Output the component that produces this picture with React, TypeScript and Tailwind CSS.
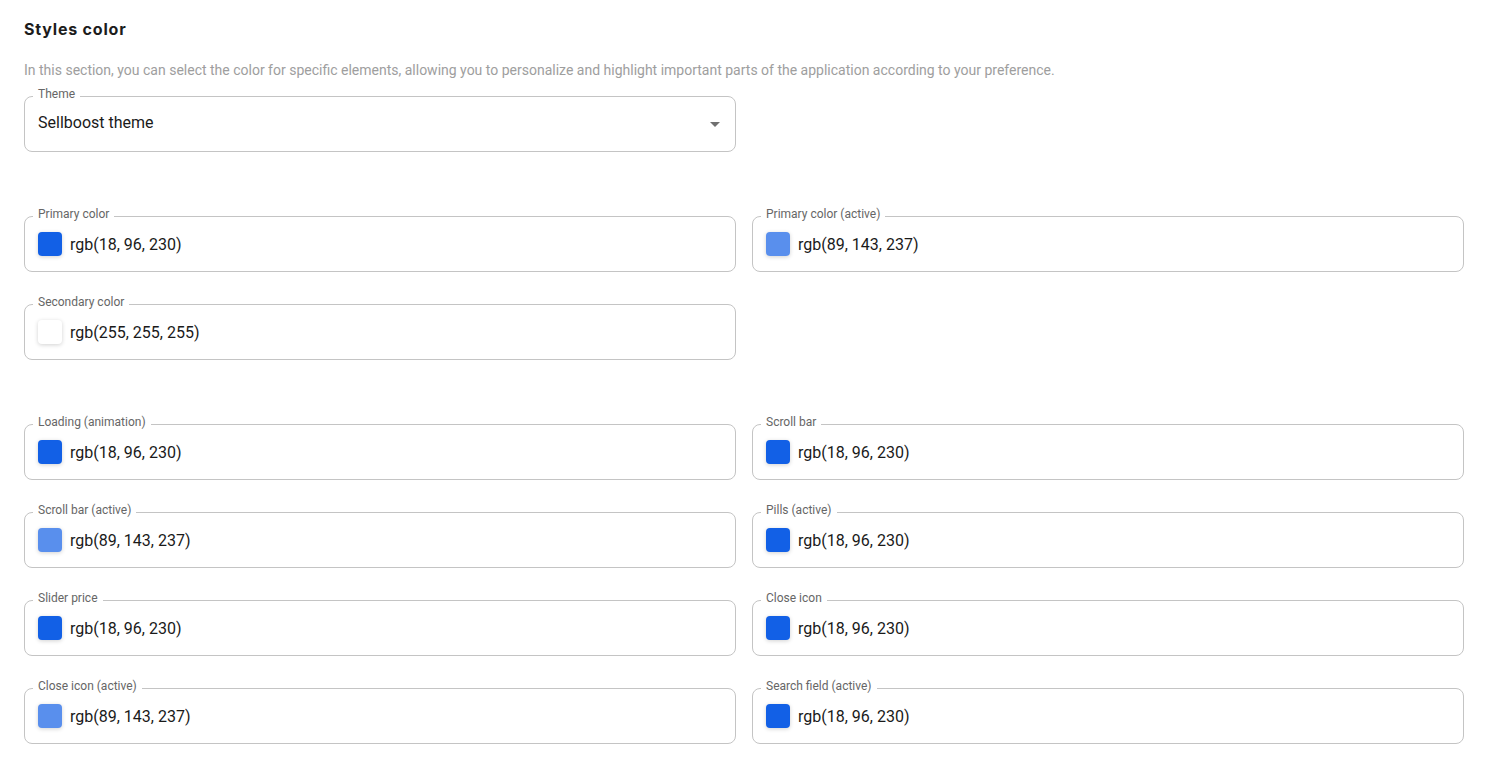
import { ReactNode } from 'react';

type ColorItem = { label: string; rgb: [number, number, number] };

const blue: [number, number, number] = [18, 96, 230];
const lightBlue: [number, number, number] = [89, 143, 237];

const baseColors: (ColorItem | null)[] = [
  { label: 'Primary color', rgb: blue },
  { label: 'Primary color (active)', rgb: lightBlue },
  { label: 'Secondary color', rgb: [255, 255, 255] },
  null,
];

const elementColors: ColorItem[] = [
  { label: 'Loading (animation)', rgb: blue },
  { label: 'Scroll bar', rgb: blue },
  { label: 'Scroll bar (active)', rgb: lightBlue },
  { label: 'Pills (active)', rgb: blue },
  { label: 'Slider price', rgb: blue },
  { label: 'Close icon', rgb: blue },
  { label: 'Close icon (active)', rgb: lightBlue },
  { label: 'Search field (active)', rgb: blue },
];

// Outlined field with the label sitting on the top border
const OutlinedField = ({ label, children }: { label: string; children: ReactNode }) => (
  <div className="relative h-14 rounded-lg border border-[#c4c4c4] flex items-center px-[13px]">
    <span className="absolute left-[8px] -top-[11px] bg-white px-[5px] text-xs leading-4 text-[#666666]">
      {label}
    </span>
    {children}
  </div>
);

const ColorField = ({ item }: { item: ColorItem }) => {
  const value = `rgb(${item.rgb.join(', ')})`;
  return (
    <OutlinedField label={item.label}>
      <span
        className="w-6 h-6 rounded-[4px] shadow-[0_1px_4px_rgba(0,0,0,0.18)] shrink-0"
        style={{ backgroundColor: value }}
      />
      <span className="ml-2 mt-[2px] text-base text-[#1a1a1a]">{value}</span>
    </OutlinedField>
  );
};

export default function App() {
  return (
    <div className="bg-white min-h-screen px-6 pt-[19px] pb-6 font-['Roboto',_'Liberation_Sans',_sans-serif]">
      <h2 className="font-['Inter',_sans-serif] font-bold text-base leading-5 text-[#1c1c1c] tracking-[0.8px]">
        Styles color
      </h2>
      <p className="mt-[21px] text-sm leading-5 text-[#9e9e9e]">
        In this section, you can select the color for specific elements, allowing you to personalize and highlight important parts of the application according to your preference.
      </p>

      {/* Theme select */}
      <div className="mt-4 w-[712px]">
        <OutlinedField label="Theme">
          <span className="text-base text-[#1a1a1a] flex-1 -mt-[2px]">Sellboost theme</span>
          <svg width="10" height="5" viewBox="0 0 10 5" className="mr-[2px]">
            <path d="M0 0 L10 0 L5 5 Z" fill="#707070" />
          </svg>
        </OutlinedField>
      </div>

      <div className="mt-16 grid grid-cols-[712px_712px] gap-x-4 gap-y-8">
        {baseColors.map((item, i) =>
          item ? <ColorField key={item.label} item={item} /> : <div key={i} />
        )}
      </div>

      <div className="mt-16 grid grid-cols-[712px_712px] gap-x-4 gap-y-8">
        {elementColors.map((item) => (
          <ColorField key={item.label} item={item} />
        ))}
      </div>
    </div>
  );
}
